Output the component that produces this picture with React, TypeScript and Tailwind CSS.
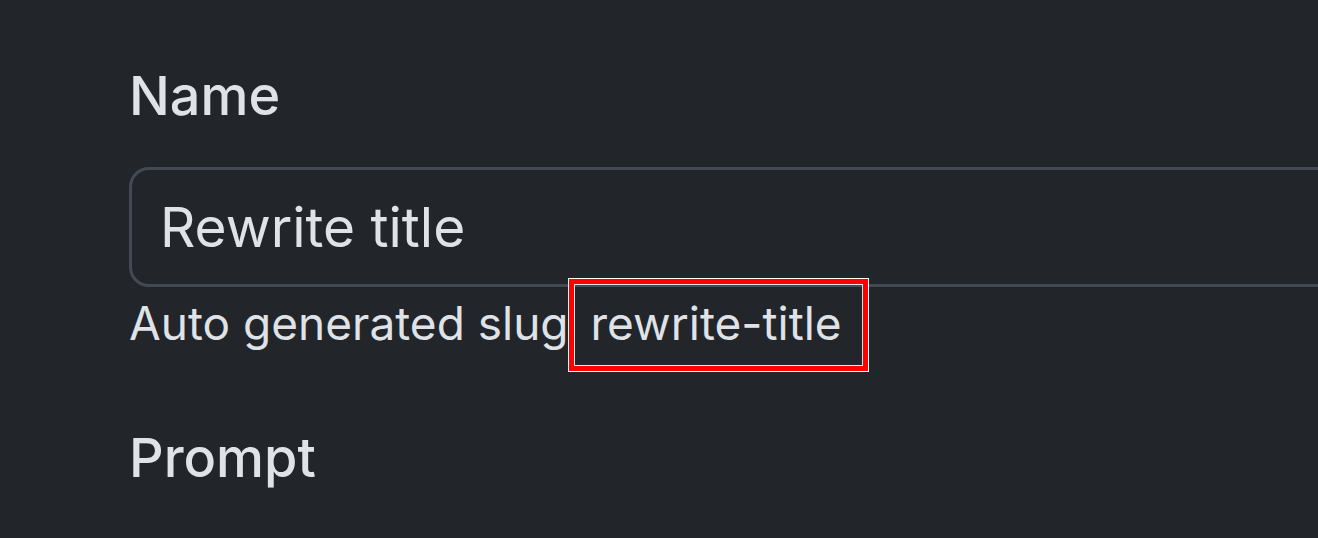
import React from "react";

export default function App() {
  return (
    <div className="w-[1318px] h-[538px] overflow-hidden bg-[#22252a] text-[#dfe2e7] font-['Inter','Noto_Sans',sans-serif]">
      <div className="pl-[129px] pt-[64px]">
        <label className="block text-[54px] font-medium leading-[64px]">Name</label>
        <div className="mt-[39px] w-[1400px] h-[120px] border-[3px] border-[#444a53] rounded-[20px] flex items-center pl-[28px] text-[55px]">
          Rewrite title
        </div>
        <p className="mt-[8px] text-[46px] leading-[56px] whitespace-nowrap">
          Auto generated slug{" "}
          <span className="relative inline-block pl-[9px]">
            rewrite-title
            <span className="absolute left-[-14px] right-[-27px] top-[-17px] bottom-[-21px] border border-white">
              <span className="block h-full border-[5px] border-[#ff0000]">
                <span className="block h-full border border-[#e8e8e8]"></span>
              </span>
            </span>
          </span>
        </p>
        <label className="block mt-[75px] text-[54px] font-medium leading-[64px]">Prompt</label>
      </div>
    </div>
  );
}
